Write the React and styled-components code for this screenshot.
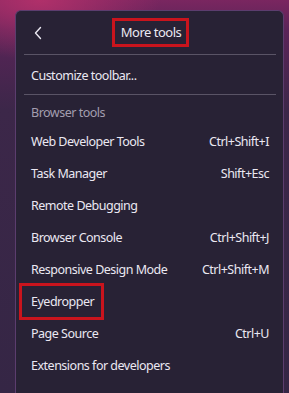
import React from 'react';
import styled, { createGlobalStyle } from 'styled-components';

const GlobalStyle = createGlobalStyle`
  html, body {
    margin: 0;
    padding: 0;
    height: 100%;
    overflow: hidden;
  }
  body {
    font-family: "Noto Sans", "Open Sans", sans-serif;
    background:
      radial-gradient(ellipse 120px 60px at 40px 0px, #b0306a 0%, rgba(176, 48, 106, 0) 100%),
      linear-gradient(180deg, #7a2660 0px, #5a2458 30px, #3c2749 110px, #352645 393px);
  }
`;

const Page = styled.div`
  padding: 10px 5px 0 15px;
  height: 393px;
  box-sizing: border-box;
`;

const Panel = styled.div`
  background: #282235;
  border: 1px solid #5c3d6e;
  border-bottom: none;
  border-radius: 6px 6px 0 0;
  height: 100%;
  box-sizing: border-box;
  color: #ebe8f2;
  font-size: 12.5px;
  letter-spacing: -0.5px;
  display: flex;
  flex-direction: column;
`;

const Header = styled.div`
  height: 43px;
  display: flex;
  align-items: center;
  justify-content: center;
  position: relative;
`;

const BackButton = styled.button`
  position: absolute;
  left: 14px;
  top: 14px;
  width: 16px;
  height: 16px;
  padding: 0;
  border: none;
  background: none;
  color: #ebe8f2;
  display: flex;
  align-items: center;
  justify-content: center;
`;

const Title = styled.span`
  font-size: 13px;
  line-height: 17px;
`;

const Highlight = styled.span`
  display: inline-flex;
  align-items: center;
  border: 3px solid #c9141d;
  padding: ${p => p.$pad};
  margin: ${p => p.$margin};
`;

const Separator = styled.div`
  height: 1px;
  background: #5a5466;
  margin: 0 7px 0 8px;
`;

const Section = styled.div`
  display: flex;
  flex-direction: column;
  padding: 4px 0 3px;
`;

const Heading = styled.div`
  height: 26px;
  padding-top: 1px;
  box-sizing: border-box;
  display: flex;
  align-items: center;
  padding-left: 15px;
  color: #a39eaf;
`;

const Item = styled.div`
  height: 32px;
  display: flex;
  align-items: center;
  justify-content: space-between;
  padding: 1px 14px 0 15px;
  box-sizing: border-box;
`;

const Shortcut = styled.span`
  color: #ebe8f2;
`;

const TOOLS = [
  { label: 'Web Developer Tools', keys: 'Ctrl+Shift+I' },
  { label: 'Task Manager', keys: 'Shift+Esc' },
  { label: 'Remote Debugging' },
  { label: 'Browser Console', keys: 'Ctrl+Shift+J' },
  { label: 'Responsive Design Mode', keys: 'Ctrl+Shift+M' },
  { label: 'Eyedropper', highlighted: true },
  { label: 'Page Source', keys: 'Ctrl+U' },
  { label: 'Extensions for developers' },
];

const App = () => (
  <>
    <GlobalStyle />
    <Page>
      <Panel>
        <Header>
          <BackButton aria-label="Back">
            <svg width="10" height="14" viewBox="0 0 10 14" fill="none">
              <path d="M7.5 1.5L2.5 7l5 5.5" stroke="currentColor" strokeWidth="1.4" strokeLinecap="round" strokeLinejoin="round" />
            </svg>
          </BackButton>
          <Highlight $pad="3px 5px 3px 6px" $margin="0 0 0 2px">
            <Title>More tools</Title>
          </Highlight>
        </Header>
        <Separator />
        <Section>
          <Item>Customize toolbar...</Item>
        </Section>
        <Separator />
        <Section>
          <Heading>Browser tools</Heading>
          {TOOLS.map(tool => (
            <Item key={tool.label}>
              {tool.highlighted ? (
                <Highlight $pad="7px 7px 7px 9px" $margin="0 0 0 -12px">
                  {tool.label}
                </Highlight>
              ) : (
                <span>{tool.label}</span>
              )}
              {tool.keys && <Shortcut>{tool.keys}</Shortcut>}
            </Item>
          ))}
        </Section>
      </Panel>
    </Page>
  </>
);

export default App;
